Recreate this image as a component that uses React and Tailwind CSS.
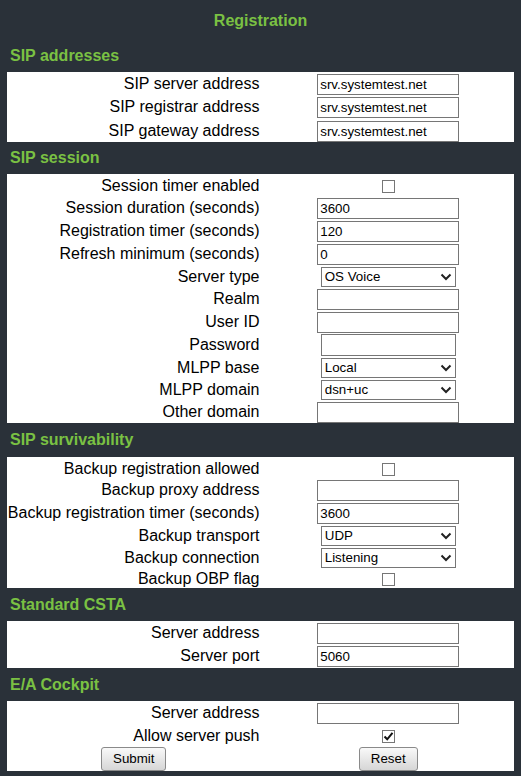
import React from 'react'

const FONT = "font-['Liberation_Sans',Arial,sans-serif]"

function Chevron() {
  return (
    <svg width="12" height="8" viewBox="0 0 12 8" className="shrink-0">
      <polyline points="1.5,1.5 6,6 10.5,1.5" fill="none" stroke="#222" strokeWidth="2" />
    </svg>
  )
}

function TextBox({ value = '' }) {
  return (
    <input
      readOnly
      value={value}
      className="w-[142px] h-[21px] border border-[#767676] bg-white px-[2px] text-[13.33px] text-black outline-none"
    />
  )
}

function PasswordBox() {
  return (
    <input
      type="password"
      readOnly
      value=""
      className="w-[135px] h-[22px] border border-[#767676] bg-white px-[2px] text-[13.33px] outline-none"
    />
  )
}

function Select({ value }) {
  return (
    <div className="w-[135px] h-[20px] border border-[#767676] bg-white flex items-center justify-between pl-[3px] pr-[3px] text-[13.33px] text-black">
      <span>{value}</span>
      <Chevron />
    </div>
  )
}

function Checkbox({ checked }) {
  return (
    <div className="w-[13px] h-[13px] border border-[#767676] bg-white flex items-center justify-center">
      {checked && (
        <svg width="11" height="11" viewBox="0 0 11 11">
          <polyline points="1.5,5.5 4.2,8.3 9.5,1.8" fill="none" stroke="#111" strokeWidth="2" />
        </svg>
      )}
    </div>
  )
}

function Row({ h, label, children }) {
  return (
    <div className={`grid grid-cols-2 items-center ${h}`}>
      <div className="text-right pr-[1px] text-[16px] text-black whitespace-nowrap">{label}</div>
      <div className="flex justify-center pl-[2px]">{children}</div>
    </div>
  )
}

function Heading({ h, children }) {
  return (
    <div className={`flex items-center pl-[3px] text-[16px] font-bold text-[#7ac143] ${h}`}>
      {children}
    </div>
  )
}

export default function App() {
  return (
    <div className={`w-[521px] h-[776px] bg-[#2a3139] px-[7px] ${FONT}`}>
      <div className="h-[39px] flex items-center justify-center pt-[3px] text-[16px] font-bold text-[#7ac143]">
        Registration
      </div>

      {/* SIP addresses */}
      <Heading h="h-[33px]">SIP addresses</Heading>
      <div className="bg-white">
        <Row h="h-[23px]" label="SIP server address"><TextBox value="srv.systemtest.net" /></Row>
        <Row h="h-[24px]" label="SIP registrar address"><TextBox value="srv.systemtest.net" /></Row>
        <Row h="h-[23px]" label="SIP gateway address"><TextBox value="srv.systemtest.net" /></Row>
      </div>

      {/* SIP session */}
      <Heading h="h-[32px]">SIP session</Heading>
      <div className="bg-white">
        <Row h="h-[22px]" label="Session timer enabled"><Checkbox /></Row>
        <Row h="h-[23px]" label="Session duration (seconds)"><TextBox value="3600" /></Row>
        <Row h="h-[23px]" label="Registration timer (seconds)"><TextBox value="120" /></Row>
        <Row h="h-[23px]" label="Refresh minimum (seconds)"><TextBox value="0" /></Row>
        <Row h="h-[22px]" label="Server type"><Select value="OS Voice" /></Row>
        <Row h="h-[23px]" label="Realm"><TextBox /></Row>
        <Row h="h-[23px]" label="User ID"><TextBox /></Row>
        <Row h="h-[23px]" label="Password"><PasswordBox /></Row>
        <Row h="h-[22px]" label="MLPP base"><Select value="Local" /></Row>
        <Row h="h-[22px]" label="MLPP domain"><Select value="dsn+uc" /></Row>
        <Row h="h-[23px]" label="Other domain"><TextBox /></Row>
      </div>

      {/* SIP survivability */}
      <Heading h="h-[34px]">SIP survivability</Heading>
      <div className="bg-white">
        <Row h="h-[21px]" label="Backup registration allowed"><Checkbox /></Row>
        <Row h="h-[23px]" label="Backup proxy address"><TextBox /></Row>
        <Row h="h-[23px]" label="Backup registration timer (seconds)"><TextBox value="3600" /></Row>
        <Row h="h-[22px]" label="Backup transport"><Select value="UDP" /></Row>
        <Row h="h-[21px]" label="Backup connection"><Select value="Listening" /></Row>
        <Row h="h-[21px]" label="Backup OBP flag"><Checkbox /></Row>
      </div>

      {/* Standard CSTA */}
      <Heading h="h-[33px]">Standard CSTA</Heading>
      <div className="bg-white">
        <Row h="h-[23px]" label="Server address"><TextBox /></Row>
        <Row h="h-[24px]" label="Server port"><TextBox value="5060" /></Row>
      </div>

      {/* E/A Cockpit */}
      <Heading h="h-[33px]">E/A Cockpit</Heading>
      <div className="bg-white">
        <Row h="h-[23px]" label="Server address"><TextBox /></Row>
        <Row h="h-[22px]" label="Allow server push"><Checkbox checked /></Row>
        <div className="grid grid-cols-2 items-center h-[25px]">
          <div className="flex justify-center">
            <button className="h-[24px] px-[11px] border border-[#8a8a8a] rounded-[3px] bg-gradient-to-b from-[#f9f9f9] to-[#d6d6d6] text-[13.33px] text-black">
              Submit
            </button>
          </div>
          <div className="flex justify-center pl-[2px]">
            <button className="h-[24px] px-[11px] border border-[#8a8a8a] rounded-[3px] bg-gradient-to-b from-[#f9f9f9] to-[#d6d6d6] text-[13.33px] text-black">
              Reset
            </button>
          </div>
        </div>
      </div>
    </div>
  )
}
